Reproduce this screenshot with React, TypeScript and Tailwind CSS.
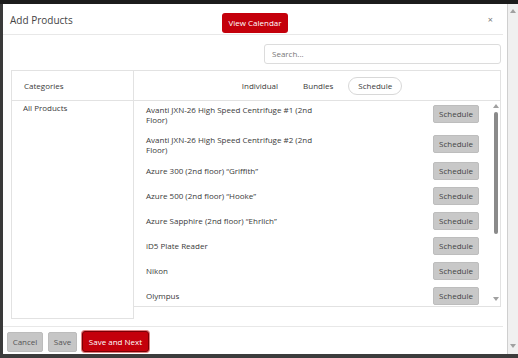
import React from "react";

const items: { name: string; wrap?: boolean; extra?: string }[] = [
  { name: "Avanti JXN-26 High Speed Centrifuge #1 (2nd Floor)", wrap: true, extra: "mb-[3px]" },
  { name: "Avanti JXN-26 High Speed Centrifuge #2 (2nd Floor)", wrap: true, extra: "mb-[0px]" },
  { name: "Azure 300 (2nd floor) \u201cGriffith\u201d" },
  { name: "Azure 500 (2nd floor) \u201cHooke\u201d" },
  { name: "Azure Sapphire (2nd floor) \u201cEhrlich\u201d" },
  { name: "iD5 Plate Reader" },
  { name: "Nikon" },
  { name: "Olympus" },
];

function Arrow({ up }: { up?: boolean }) {
  return (
    <svg width="6" height="4" viewBox="0 0 6 4" className="block">
      {up ? <path d="M0 4 L3 0 L6 4 Z" fill="#a0a0a0" /> : <path d="M0 0 L6 0 L3 4 Z" fill="#a0a0a0" />}
    </svg>
  );
}

export default function App() {
  return (
    <div
      className="w-[518px] h-[358px] bg-[#1c1c1c] flex flex-col overflow-hidden text-[#3a3a3a]"
      style={{ fontFamily: '"Open Sans", "Noto Sans", sans-serif' }}
    >
      <div className="h-[4px] shrink-0" />
      <div className="flex-1 flex min-h-0">
        <div className="w-[3px] bg-[#3a3a3a]" />
        {/* modal */}
        <div className="w-[504px] bg-white flex flex-col pr-[4px]">
          {/* header */}
          <div className="h-[31px] grid grid-cols-[1fr_auto_1fr] items-center border-b border-[#e8e8e8]">
            <div className="pl-[7px] pt-[1px] text-[10px] text-[#444] leading-none">Add Products</div>
            <div className="pt-[2px] pl-[4px]">
              <button className="h-[20px] w-[66px] bg-[#c4000b] text-white text-[8px] rounded-[3px] leading-none">
                View Calendar
              </button>
            </div>
            <div className="flex justify-end pr-[10px] text-[9px] text-[#777] leading-none">×</div>
          </div>
          {/* search */}
          <div className="flex justify-end mt-[9px] pr-[2px]">
            <div className="w-[237px] h-[20px] border border-[#dcdcdc] rounded-[3px] flex items-center pl-[7px] text-[8px] text-[#777]">
              Search...
            </div>
          </div>
          {/* table */}
          <div className="mt-[6px] ml-[8px] mr-[2px] h-[249px] flex">
            <div className="w-[123px] border border-[#e2e2e2] flex flex-col">
              <div className="h-[30px] border-b border-[#e2e2e2] flex items-center pl-[12px] text-[8px] leading-none">
                Categories
              </div>
              <div className="pl-[11px] pt-[2px] text-[8px] leading-[10px]">All Products</div>
            </div>
            <div className="flex-1 h-[237px] border-t border-r border-b border-[#e2e2e2] flex flex-col min-w-0">
              <div className="h-[30px] shrink-0 border-b border-[#e2e2e2] flex items-center justify-center gap-[5px] text-[8px] leading-none">
                <div className="h-[18px] px-[9px] flex items-center rounded-full border border-transparent">Individual</div>
                <div className="h-[18px] px-[9px] flex items-center rounded-full border border-transparent">Bundles</div>
                <div className="h-[18px] px-[9px] flex items-center rounded-full border border-[#d8d8d8]">Schedule</div>
              </div>
              <div className="flex-1 flex min-h-0">
                <div className="flex-1 overflow-hidden pt-[4px] pl-[12px] pr-[12px]">
                  {items.map((it) => (
                    <div key={it.name} className="flex items-start justify-between pb-[7px]">
                      <div
                        className={
                          it.wrap
                            ? `w-[178px] text-[8px] leading-[10px] ${it.extra}`
                            : "text-[8px] leading-[10px] py-[4px]"
                        }
                      >
                        {it.name}
                      </div>
                      <button className="w-[46px] h-[18px] shrink-0 bg-[#c8c8c8] border border-[#bdbdbd] rounded-[2px] text-[8px] text-[#444] leading-none">
                        Schedule
                      </button>
                    </div>
                  ))}
                </div>
                <div className="w-[9px] flex flex-col items-center pt-[3px] pb-[5px]">
                  <Arrow up />
                  <div className="w-[4px] h-[122px] mt-[4px] bg-[#8a8a8a] rounded-[2px]" />
                  <div className="flex-1" />
                  <Arrow />
                </div>
              </div>
            </div>
          </div>
          {/* footer */}
          <div className="mt-[7px] border-t border-[#e8e8e8] flex items-center gap-[5px] pl-[4px] pt-[4px]">
            <button className="h-[20px] w-[36px] bg-[#c6c6c6] border border-[#bcbcbc] rounded-[2px] text-[8px] text-[#555] leading-none">
              Cancel
            </button>
            <button className="h-[20px] w-[29px] bg-[#c6c6c6] border border-[#bcbcbc] rounded-[2px] text-[8px] text-[#555] leading-none">
              Save
            </button>
            <button className="h-[21px] w-[67px] bg-[#c4000b] border border-[#7a0006] rounded-[3px] text-[8px] text-white leading-none shadow-[0_0_0_1px_#e08080]">
              Save and Next
            </button>
          </div>
        </div>
        {/* page scrollbar */}
        <div className="flex-1 bg-[#f0f0f0] border-l border-[#cfcfcf] flex flex-col items-center pt-[5px] pb-[6px]">
          <Arrow up />
          <div className="flex-1" />
          <Arrow />
        </div>
      </div>
      <div className="h-[4px] shrink-0 bg-[#3c3c3c]" />
    </div>
  );
}
